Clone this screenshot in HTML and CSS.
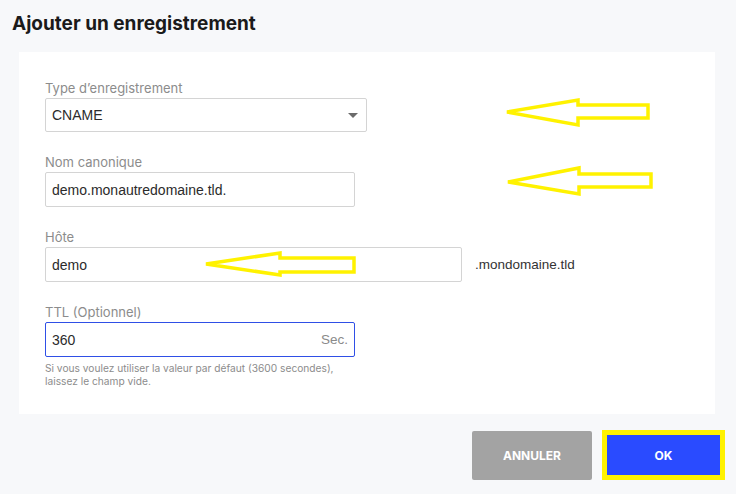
FILE: index.html
```html
<!DOCTYPE html>
<html lang="fr">
<head>
  <meta charset="UTF-8">
  <title>Ajouter un enregistrement</title>
  <link rel="stylesheet" href="styles.css">
</head>
<body>
  <div class="dialog">
    <h1>Ajouter un enregistrement</h1>

    <div class="card">
      <div class="field">
        <label>Type d’enregistrement</label>
        <div class="select">
          <span>CNAME</span>
          <span class="caret"></span>
        </div>
      </div>

      <div class="field">
        <label>Nom canonique</label>
        <div class="input narrow">demo.monautredomaine.tld.</div>
      </div>

      <div class="field">
        <label>Hôte</label>
        <div class="row">
          <div class="input wide">demo</div>
          <span class="suffix">.mondomaine.tld</span>
        </div>
      </div>

      <div class="field">
        <label>TTL (Optionnel)</label>
        <div class="input narrow focused">
          <span>360</span>
          <span class="unit">Sec.</span>
        </div>
        <p class="help">Si vous voulez utiliser la valeur par défaut (3600 secondes),<br>laissez le champ vide.</p>
      </div>
    </div>

    <div class="actions">
      <button class="btn cancel">ANNULER</button>
      <div class="highlight">
        <button class="btn ok">OK</button>
      </div>
    </div>

    <!-- annotation arrows drawn over the form -->
    <svg class="marks" width="736" height="494" viewBox="0 0 736 494">
      <g fill="none" stroke="#fff200" stroke-width="3.5" stroke-linejoin="miter">
        <path d="M507 112 L578 100 L578 105 L648 105 L648 118 L578 118 L578 125 Z"/>
        <path d="M508 182 L579 168 L579 174 L651 174 L651 187 L579 187 L579 194 Z"/>
        <path d="M206 264 L280 253 L280 258 L354 258 L354 272 L280 272 L280 275 Z"/>
      </g>
    </svg>
  </div>
</body>
</html>
```

FILE: styles.css
```css
* {
  box-sizing: border-box;
}

body {
  margin: 0;
  background: #f7f8fa;
  font-family: Inter, "Liberation Sans", sans-serif;
  color: #1f1f1f;
}

.dialog {
  position: relative;
  width: 736px;
  height: 494px;
  padding-top: 12px;
}

h1 {
  margin: 0 0 17px 12px;
  font-size: 19px;
  line-height: 23px;
  font-weight: 700;
  color: #1a1a1a;
}

.card {
  margin-left: 19px;
  width: 696px;
  height: 362px;
  background: #fff;
  padding: 28px 0 0 26px;
}

.field {
  margin-bottom: 22px;
}

.field label {
  display: block;
  font-size: 13px;
  line-height: 16px;
  margin-bottom: 2px;
  color: #8c8c8c;
}

.select,
.input {
  display: flex;
  align-items: center;
  height: 35px;
  border: 1px solid #d4d4d4;
  border-radius: 2px;
  padding: 0 6px;
  font-family: "Liberation Sans", Arial, sans-serif;
  font-size: 14px;
  color: #2b2b2b;
}

.select {
  width: 322px;
  height: 34px;
  justify-content: space-between;
  padding-right: 8px;
}

.caret {
  width: 0;
  height: 0;
  border-left: 5px solid transparent;
  border-right: 5px solid transparent;
  border-top: 5px solid #6b6b6b;
}

.input.narrow {
  width: 310px;
}

.input.wide {
  width: 417px;
}

.input.focused {
  border-color: #2f4fe6;
  justify-content: space-between;
}

.unit {
  color: #8a8a8a;
  font-size: 13.5px;
}

.row {
  display: flex;
  align-items: center;
  gap: 13px;
}

.suffix {
  font-family: "Liberation Sans", Arial, sans-serif;
  font-size: 13.5px;
  color: #333;
}

.help {
  margin: 5px 0 0;
  font-size: 10.2px;
  line-height: 13px;
  color: #8c8c8c;
}

.actions {
  display: flex;
  justify-content: flex-end;
  align-items: center;
  gap: 10px;
  padding: 16px 11px 0 0;
}

.btn {
  border: none;
  color: #fff;
  font-family: Inter, "Liberation Sans", sans-serif;
  font-size: 12px;
  font-weight: 700;
  cursor: pointer;
}

.btn.cancel {
  width: 120px;
  height: 49px;
  background: #a3a3a3;
  border-radius: 2px;
}

.highlight {
  border: 5px solid #fff200;
}

.btn.ok {
  display: block;
  width: 113px;
  height: 40px;
  background: #2a4bff;
}

.marks {
  position: absolute;
  top: 0;
  left: 0;
  pointer-events: none;
}
```
